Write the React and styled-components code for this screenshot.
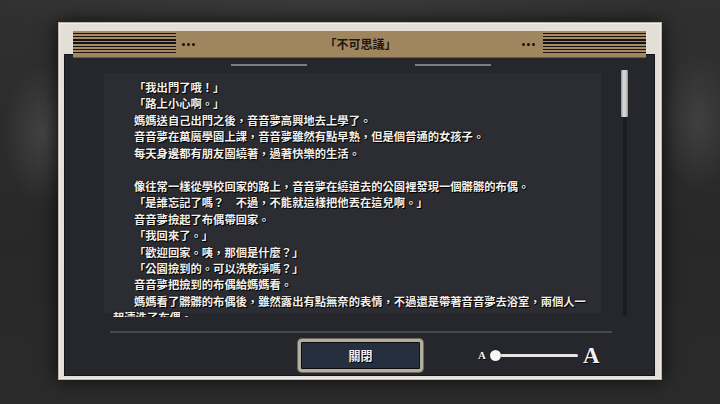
import React from 'react'
import styled, { createGlobalStyle } from 'styled-components'

const story = [
  '「我出門了哦！」',
  '「路上小心啊。」',
  '媽媽送自己出門之後，音音夢高興地去上學了。',
  '音音夢在萬魔學園上課，音音夢雖然有點早熟，但是個普通的女孩子。',
  '每天身邊都有朋友圍繞著，過著快樂的生活。',
  '',
  '像往常一樣從學校回家的路上，音音夢在繞道去的公園裡發現一個髒髒的布偶。',
  '「是誰忘記了嗎？　不過，不能就這樣把他丟在這兒啊。」',
  '音音夢撿起了布偶帶回家。',
  '「我回來了。」',
  '「歡迎回家。咦，那個是什麼？」',
  '「公園撿到的。可以洗乾淨嗎？」',
  '音音夢把撿到的布偶給媽媽看。',
  '媽媽看了髒髒的布偶後，雖然露出有點無奈的表情，不過還是帶著音音夢去浴室，兩個人一起清洗了布偶。',
]

function App() {
  return (
    <Page>
      <GlobalStyle />
      <Frame>
        <Header>
          <Stripes />
          <Dots side="left"><Dot /><Dot /><Dot /></Dots>
          <Title>「不可思議」</Title>
          <Dots side="right"><Dot /><Dot /><Dot /></Dots>
          <Stripes />
        </Header>
        <Panel>
          <Tabs>
            <TabLine />
            <TabLine />
          </Tabs>
          <Body>
            <TextBox lang="zh-Hant">
              {story.map((line, i) => (
                <Line key={i}>{line || '\u00a0'}</Line>
              ))}
            </TextBox>
            <ScrollTrack>
              <ScrollThumb />
            </ScrollTrack>
          </Body>
          <Divider />
          <Footer>
            <CloseButton>關閉</CloseButton>
            <SizeSlider>
              <SmallA>A</SmallA>
              <Track>
                <Knob />
              </Track>
              <BigA>A</BigA>
            </SizeSlider>
          </Footer>
        </Panel>
      </Frame>
    </Page>
  )
}

const GlobalStyle = createGlobalStyle`
  html, body {
    margin: 0;
    padding: 0;
    width: 720px;
    height: 404px;
    overflow: hidden;
    background: #2a2a2a;
  }
  #root {
    width: 720px;
    height: 404px;
  }
`
const Page = styled.div`
  box-sizing: border-box;
  width: 720px;
  height: 404px;
  padding: 22px 0 0 58px;
  background:
    radial-gradient(ellipse 40px 70px at 6% 33%, rgba(110, 110, 110, 0.35), transparent),
    radial-gradient(ellipse 40px 70px at 97% 30%, rgba(110, 110, 110, 0.3), transparent),
    radial-gradient(ellipse 360px 40px at 45% 0%, rgba(90, 90, 90, 0.25), transparent),
    linear-gradient(#303030, #282828 60%, #2b2b2b);
  font-family: "Noto Sans CJK TC", "Noto Sans", sans-serif;
`
const Frame = styled.div`
  box-sizing: border-box;
  width: 604px;
  height: 358px;
  padding: 9px 6px 3px 5px;
  display: flex;
  flex-direction: column;
  background: #e3ded7;
  border: 1px solid #b9b3ab;
  box-shadow: 0 0 18px rgba(0, 0, 0, 0.7), inset 0 0 0 1px #f1ede7;
`
const Header = styled.div`
  position: relative;
  z-index: 1;
  height: 26px;
  margin: -1px 9px -3px 9px;
  display: flex;
  align-items: center;
  background: #a0865f;
  box-shadow: 0 1px 0 #6b5a40;
`
const Stripes = styled.div`
  width: 103px;
  height: 23px;
  align-self: flex-start;
  background: repeating-linear-gradient(
    to bottom,
    #a58b63 0 1.7px,
    #17140f 1.7px 3.2px
  );
`
const Dots = styled.div`
  display: flex;
  gap: 2px;
  margin: ${p => (p.side === 'left' ? '0 0 0 6px' : '0 8px 0 0')};
`
const Dot = styled.span`
  width: 3px;
  height: 3px;
  border-radius: 50%;
  background: #16130f;
`
const Title = styled.div`
  flex: 1;
  text-align: center;
  font-size: 12px;
  font-weight: 700;
  color: #1d1812;
  line-height: 26px;
  padding-left: 4px;
`
const Panel = styled.div`
  box-sizing: border-box;
  flex: 1;
  display: flex;
  flex-direction: column;
  padding-top: 9px;
  background: #26272c;
  border: 1px solid #141518;
`
const Tabs = styled.div`
  display: flex;
  justify-content: center;
  gap: 108px;
  padding-left: 2px;
`
const TabLine = styled.div`
  width: 76px;
  height: 2px;
  background: #7d7d7d;
`
const Body = styled.div`
  display: flex;
  align-items: flex-start;
  gap: 20px;
  margin-top: 4px;
  padding-left: 39px;
  height: 247px;
`
const TextBox = styled.div`
  box-sizing: border-box;
  width: 497px;
  height: 244px;
  margin-top: 3px;
  padding: 6px 0 0 9px;
  overflow: hidden;
  background: linear-gradient(#2c2d32 calc(100% - 4px), transparent 0);
`
const Line = styled.p`
  margin: 0;
  width: 478px;
  text-indent: 21px;
  font-size: 11.3px;
  font-weight: 700;
  line-height: 16.46px;
  color: #f3f0ea;
  text-shadow: 1px 1px 0 #000, 0 0 2px #000;
  white-space: normal;
`
const ScrollTrack = styled.div`
  position: relative;
  width: 7px;
  height: 246px;
  background: linear-gradient(to right, transparent 2px, #1c1d21 2px 6px, transparent 6px);
`
const ScrollThumb = styled.div`
  width: 7px;
  height: 47px;
  border-radius: 1px;
  background: linear-gradient(to right, #8e8e8e, #d6d6d6 30%, #cfcfcf 70%, #8a8a8a);
`
const Divider = styled.div`
  width: 502px;
  height: 2px;
  margin: 14px 0 0 45px;
  background: #454a4f;
`
const Footer = styled.div`
  display: flex;
  align-items: center;
  margin-top: 6px;
  padding-left: 233px;
`
const CloseButton = styled.button`
  box-sizing: border-box;
  width: 125px;
  height: 33px;
  padding: 0;
  border: 3px solid #b4ae9f;
  border-radius: 4px;
  background: #252f3e;
  box-shadow: inset 0 0 0 1px #0b0d12, 0 0 0 1px #6f6a60;
  color: #f4f2ee;
  font-family: "Noto Sans CJK TC", sans-serif;
  font-size: 12px;
  font-weight: 700;
  text-shadow: 1px 1px 0 #000;
`
const SizeSlider = styled.div`
  display: flex;
  align-items: center;
  margin-left: 55px;
`
const SmallA = styled.span`
  font-family: "Liberation Serif", serif;
  font-weight: 700;
  font-size: 11px;
  color: #f4f2ee;
  text-shadow: 1px 1px 0 #000;
  line-height: 1;
`
const Track = styled.div`
  position: relative;
  width: 83px;
  height: 3px;
  margin-left: 9px;
  border-radius: 2px;
  background: #e4e4e4;
`
const Knob = styled.div`
  position: absolute;
  left: -5px;
  top: -4px;
  width: 11px;
  height: 11px;
  border-radius: 50%;
  background: #f6f6f6;
  box-shadow: 0 0 1px #000;
`
const BigA = styled.span`
  margin-left: 5px;
  font-family: "Liberation Serif", serif;
  font-weight: 700;
  font-size: 23px;
  color: #f4f2ee;
  text-shadow: 1px 1px 0 #000;
  line-height: 1;
`

export default App
